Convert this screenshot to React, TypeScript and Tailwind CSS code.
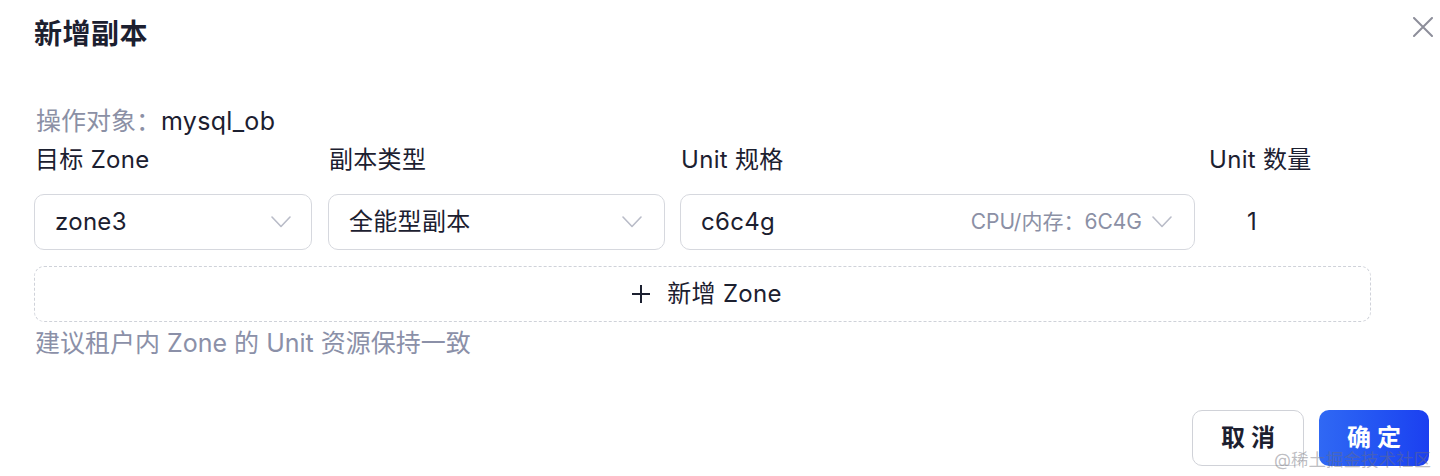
import React from "react";

const Chevron = () => (
  <svg width="20" height="12" viewBox="0 0 20 12" fill="none" className="shrink-0">
    <path d="M1 1L10 10.5L19 1" stroke="#b9bcc8" strokeWidth="1.6" strokeLinecap="round" strokeLinejoin="round" />
  </svg>
);

export default function App() {
  return (
    <div
      className="relative w-[1440px] h-[476px] bg-white overflow-hidden text-[#1c2030]"
      style={{ fontFamily: '"Inter", "Noto Sans CJK SC", sans-serif' }}
    >
      {/* Header */}
      <div className="flex items-center justify-between h-[68px] pl-[34px] pr-[7px]">
        <div className="text-[28px] font-bold leading-[36px] tracking-[0.5px]">新增副本</div>
        <button className="w-[20px] h-[20px] -mt-[14px] flex items-center justify-center">
          <svg width="20" height="20" viewBox="0 0 20 20" fill="none">
            <path d="M1 1L19 19M19 1L1 19" stroke="#8d8e9a" strokeWidth="2" strokeLinecap="round" />
          </svg>
        </button>
      </div>

      {/* Body */}
      <div className="px-[34px] pt-[35px]">
        <div className="flex items-center h-[36px] text-[25px] leading-[36px]">
          <span className="text-[#8b90a5] pl-[2px]">操作对象：</span>
          <span className="text-[#1c2030] tracking-[0.3px]">mysql_ob</span>
        </div>

        <div className="flex gap-4 mt-[3px]">
          <div className="w-[278px] shrink-0">
            <div className="h-[36px] leading-[36px] text-[24px] tracking-[0.3px] pl-[1px]">目标 Zone</div>
            <div className="mt-[16px] h-[56px] border border-[#d6d8de] rounded-[10px] flex items-center justify-between pl-[20px] pr-[20px]">
              <span className="text-[24px] tracking-[0.3px]">zone3</span>
              <Chevron />
            </div>
          </div>
          <div className="w-[337px] shrink-0">
            <div className="h-[36px] leading-[36px] text-[24px] tracking-[0.3px] pl-[1px]">副本类型</div>
            <div className="mt-[16px] h-[56px] border border-[#d6d8de] rounded-[10px] flex items-center justify-between pl-[20px] pr-[22px]">
              <span className="text-[24px] tracking-[0.3px]">全能型副本</span>
              <Chevron />
            </div>
          </div>
          <div className="w-[514px] shrink-0">
            <div className="h-[36px] leading-[36px] text-[24px] tracking-[0.3px]">Unit 规格</div>
            <div className="mt-[16px] h-[56px] border border-[#d6d8de] rounded-[10px] flex items-center pl-[20px] pr-[22px] -ml-[1px]">
              <span className="text-[24px] flex-1 tracking-[0.3px]">c6c4g</span>
              <span className="text-[21px] text-[#8b90a5] mr-[10px]">CPU/内存：6C4G</span>
              <Chevron />
            </div>
          </div>
          <div className="flex-1">
            <div className="h-[36px] leading-[36px] text-[24px] tracking-[0.3px] -ml-[2px]">Unit 数量</div>
            <div className="mt-[16px] h-[56px] flex items-center pl-[36px] text-[24px]">1</div>
          </div>
        </div>

        <div className="mt-[16px] w-[1337px] h-[56px] border border-dashed border-[#cfd2d9] rounded-[10px] flex items-center justify-center gap-[16px] text-[24px] pl-[8px]">
          <svg width="20" height="20" viewBox="0 0 20 20" fill="none">
            <path d="M10 1V19M1 10H19" stroke="#1c2030" strokeWidth="2" />
          </svg>
          <span className="tracking-[0.3px]">新增 Zone</span>
        </div>

        <div className="mt-[3px] h-[36px] leading-[36px] text-[25px] text-[#8b90a8] pl-[1px]">
          建议租户内 Zone 的 Unit 资源保持一致
        </div>
      </div>

      {/* Footer */}
      <div className="flex justify-end gap-[15px] pr-[11px] mt-[49px]">
        <button className="w-[112px] h-[56px] border border-[#d0d2d8] rounded-[10px] bg-white text-[24px] font-semibold tracking-[6px] pl-[6px] text-[#1c2030]">
          取消
        </button>
        <button className="w-[110px] h-[56px] rounded-[10px] bg-gradient-to-r from-[#3068f4] to-[#1c3ff0] text-white text-[24px] font-semibold tracking-[6px] pl-[6px]">
          确定
        </button>
      </div>

      <div className="absolute left-[1274px] top-[448px] text-[17.5px] leading-[24px] text-[rgba(110,110,120,0.45)] whitespace-nowrap">
        @稀土掘金技术社区
      </div>
    </div>
  );
}
